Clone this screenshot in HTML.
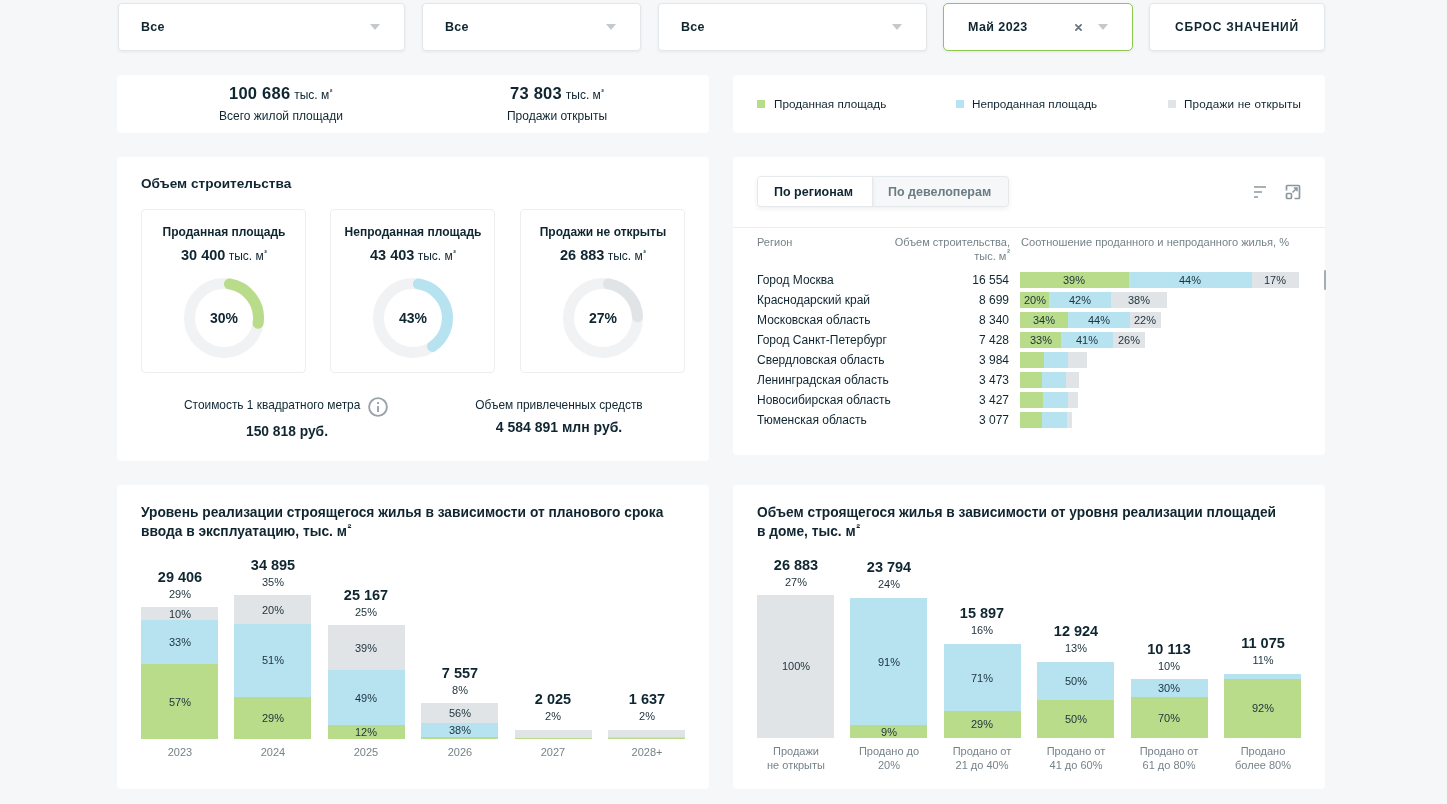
<!DOCTYPE html>
<html><head><meta charset="utf-8"><style>
html,body{margin:0;padding:0;}
body{width:1447px;height:804px;position:relative;overflow:hidden;background:#f6f7f8;font-family:"Liberation Sans",sans-serif;}
body div{position:absolute;}
.t{white-space:nowrap;will-change:transform;}
sup{font-size:0.68em;font-weight:700;vertical-align:0;position:relative;top:-0.5em;margin-left:0.5px;line-height:0;}
</style></head><body>
<div style="left:117.5px;top:3px;width:287.0px;height:48px;background:#fff;border:1px solid #e4e7e9;border-radius:4px;box-shadow:0 1px 3px rgba(20,40,50,0.07);box-sizing:border-box;"></div>
<div class="t" style="left:141px;top:21px;font-size:12.5px;line-height:12.5px;font-weight:700;color:#0f2631;letter-spacing:0.2px;">Все</div>
<svg style="position:absolute;left:370px;top:24px" width="10" height="6"><path d="M0 0H10L5 6Z" fill="#c3c9cc"/></svg>
<div style="left:421.5px;top:3px;width:219.5px;height:48px;background:#fff;border:1px solid #e4e7e9;border-radius:4px;box-shadow:0 1px 3px rgba(20,40,50,0.07);box-sizing:border-box;"></div>
<div class="t" style="left:445px;top:21px;font-size:12.5px;line-height:12.5px;font-weight:700;color:#0f2631;letter-spacing:0.2px;">Все</div>
<svg style="position:absolute;left:606px;top:24px" width="10" height="6"><path d="M0 0H10L5 6Z" fill="#c3c9cc"/></svg>
<div style="left:657.5px;top:3px;width:269.0px;height:48px;background:#fff;border:1px solid #e4e7e9;border-radius:4px;box-shadow:0 1px 3px rgba(20,40,50,0.07);box-sizing:border-box;"></div>
<div class="t" style="left:681px;top:21px;font-size:12.5px;line-height:12.5px;font-weight:700;color:#0f2631;letter-spacing:0.2px;">Все</div>
<svg style="position:absolute;left:892px;top:24px" width="10" height="6"><path d="M0 0H10L5 6Z" fill="#c3c9cc"/></svg>
<div style="left:943px;top:3px;width:190px;height:48px;background:#fff;border:1.5px solid #8dc84f;border-radius:5px;box-sizing:border-box;box-shadow:0 1px 3px rgba(20,40,50,0.07);"></div>
<div class="t" style="left:968px;top:21px;font-size:12.5px;line-height:12.5px;font-weight:700;color:#0f2631;letter-spacing:0.4px;">Май 2023</div>
<svg style="position:absolute;left:1074px;top:23px" width="9" height="9"><path d="M1.9 1.9L7.1 7.1M7.1 1.9L1.9 7.1" stroke="#617379" stroke-width="1.7" stroke-linecap="round"/></svg>
<svg style="position:absolute;left:1098px;top:24px" width="10" height="6"><path d="M0 0H10L5 6Z" fill="#c3c9cc"/></svg>
<div style="left:1149px;top:3px;width:176px;height:48px;background:#fff;border:1px solid #e4e7e9;border-radius:4px;box-shadow:0 1px 3px rgba(20,40,50,0.07);box-sizing:border-box;"></div>
<div class="t" style="left:1175px;top:21px;font-size:12px;line-height:12px;font-weight:700;color:#0f2631;letter-spacing:0.8px;">СБРОС ЗНАЧЕНИЙ</div>
<div style="left:117px;top:75px;width:592px;height:58px;background:#fff;border-radius:4px;"></div>
<div class="t" style="left:229px;top:85px;font-size:16.5px;line-height:16.5px;font-weight:700;color:#0f2631;"><span style="letter-spacing:0.25px">100 686</span><span style="font-size:12px;font-weight:400;margin-left:0.5px"> тыс. м<sup>²</sup></span></div>
<div class="t" style="left:-19px;width:600px;text-align:center;top:110px;font-size:12px;line-height:12px;font-weight:400;color:#0f2631;">Всего жилой площади</div>
<div class="t" style="left:510px;top:85px;font-size:16.5px;line-height:16.5px;font-weight:700;color:#0f2631;"><span style="letter-spacing:0.25px">73 803</span><span style="font-size:12px;font-weight:400;margin-left:0.5px"> тыс. м<sup>²</sup></span></div>
<div class="t" style="left:256.5px;width:600px;text-align:center;top:110px;font-size:12px;line-height:12px;font-weight:400;color:#0f2631;">Продажи открыты</div>
<div style="left:733px;top:75px;width:592px;height:58px;background:#fff;border-radius:4px;"></div>
<div style="left:757px;top:100px;width:8px;height:8px;background:#b9dc8b;"></div>
<div class="t" style="left:773.5px;top:98px;font-size:11.7px;line-height:11.7px;font-weight:400;color:#0f2631;">Проданная площадь</div>
<div style="left:956px;top:100px;width:8px;height:8px;background:#b7e3f1;"></div>
<div class="t" style="left:972.3px;top:98px;font-size:11.7px;line-height:11.7px;font-weight:400;color:#0f2631;">Непроданная площадь</div>
<div style="left:1168px;top:100px;width:8px;height:8px;background:#e1e4e6;"></div>
<div class="t" style="left:1184.2px;top:98px;font-size:11.7px;line-height:11.7px;font-weight:400;color:#0f2631;letter-spacing:0.2px;">Продажи не открыты</div>
<div style="left:117px;top:157px;width:592px;height:304px;background:#fff;border-radius:4px;"></div>
<div class="t" style="left:141px;top:177px;font-size:13.6px;line-height:13.6px;font-weight:700;color:#0f2631;">Объем строительства</div>
<div style="left:141px;top:209px;width:165px;height:164px;border:1px solid #eceef0;border-radius:4px;box-sizing:border-box;background:#fff;"></div>
<div class="t" style="left:-76.5px;width:600px;text-align:center;top:226px;font-size:12px;line-height:12px;font-weight:700;color:#0f2631;">Проданная площадь</div>
<div class="t" style="left:-76.5px;width:600px;text-align:center;top:248px;font-size:14.5px;line-height:14.5px;font-weight:700;color:#0f2631;">30 400<span style="font-size:12px;font-weight:400"> тыс. м<sup>²</sup></span></div>
<svg style="position:absolute;left:182.5px;top:277px" width="82" height="82" viewBox="-41 -41 82 82"><circle r="34.5" fill="none" stroke="#f1f2f4" stroke-width="11"/><path d="M5.48 -34.06A34.5 34.5 0 0 1 34.09 5.32" fill="none" stroke="#b9dc8b" stroke-width="11" stroke-linecap="round"/></svg>
<div class="t" style="left:-76.5px;width:600px;text-align:center;top:311px;font-size:14px;line-height:14px;font-weight:700;color:#0f2631;">30%</div>
<div style="left:330px;top:209px;width:165px;height:164px;border:1px solid #eceef0;border-radius:4px;box-sizing:border-box;background:#fff;"></div>
<div class="t" style="left:112.5px;width:600px;text-align:center;top:226px;font-size:12px;line-height:12px;font-weight:700;color:#0f2631;">Непроданная площадь</div>
<div class="t" style="left:112.5px;width:600px;text-align:center;top:248px;font-size:14.5px;line-height:14.5px;font-weight:700;color:#0f2631;">43 403<span style="font-size:12px;font-weight:400"> тыс. м<sup>²</sup></span></div>
<svg style="position:absolute;left:371.5px;top:277px" width="82" height="82" viewBox="-41 -41 82 82"><circle r="34.5" fill="none" stroke="#f1f2f4" stroke-width="11"/><path d="M5.48 -34.06A34.5 34.5 0 0 1 19.46 28.49" fill="none" stroke="#b7e3f1" stroke-width="11" stroke-linecap="round"/></svg>
<div class="t" style="left:112.5px;width:600px;text-align:center;top:311px;font-size:14px;line-height:14px;font-weight:700;color:#0f2631;">43%</div>
<div style="left:520px;top:209px;width:165px;height:164px;border:1px solid #eceef0;border-radius:4px;box-sizing:border-box;background:#fff;"></div>
<div class="t" style="left:302.5px;width:600px;text-align:center;top:226px;font-size:12px;line-height:12px;font-weight:700;color:#0f2631;">Продажи не открыты</div>
<div class="t" style="left:302.5px;width:600px;text-align:center;top:248px;font-size:14.5px;line-height:14.5px;font-weight:700;color:#0f2631;">26 883<span style="font-size:12px;font-weight:400"> тыс. м<sup>²</sup></span></div>
<svg style="position:absolute;left:561.5px;top:277px" width="82" height="82" viewBox="-41 -41 82 82"><circle r="34.5" fill="none" stroke="#f1f2f4" stroke-width="11"/><path d="M5.48 -34.06A34.5 34.5 0 0 1 34.48 -1.16" fill="none" stroke="#e1e4e6" stroke-width="11" stroke-linecap="round"/></svg>
<div class="t" style="left:302.5px;width:600px;text-align:center;top:311px;font-size:14px;line-height:14px;font-weight:700;color:#0f2631;">27%</div>
<div class="t" style="left:184px;top:400px;font-size:11.9px;line-height:11.9px;font-weight:400;color:#0f2631;">Стоимость 1 квадратного метра</div>
<svg style="position:absolute;left:368px;top:397px" width="20" height="20" viewBox="0 0 20 20"><circle cx="10" cy="10" r="8.9" fill="none" stroke="#98a4a9" stroke-width="1.9"/><rect x="9.05" y="5" width="1.9" height="2" fill="#98a4a9"/><rect x="9.05" y="9.1" width="1.9" height="5.9" fill="#98a4a9"/></svg>
<div class="t" style="left:-13px;width:600px;text-align:center;top:425px;font-size:13.8px;line-height:13.8px;font-weight:700;color:#0f2631;">150 818 руб.</div>
<div class="t" style="left:258.5px;width:600px;text-align:center;top:400px;font-size:11.9px;line-height:11.9px;font-weight:400;color:#0f2631;">Объем привлеченных средств</div>
<div class="t" style="left:258.5px;width:600px;text-align:center;top:420px;font-size:14px;line-height:14px;font-weight:700;color:#0f2631;">4 584 891 млн руб.</div>
<div style="left:733px;top:157px;width:592px;height:298px;background:#fff;border-radius:4px;"></div>
<div style="left:757px;top:176px;width:252px;height:31px;border:1px solid #e6e9eb;border-radius:4px;box-sizing:border-box;background:#f6f7f9;overflow:hidden;box-shadow:0 2px 5px rgba(20,40,50,0.07)"><div style="left:0;top:0;width:114px;height:29px;background:#fff;border-right:1px solid #e6e9eb;box-shadow:0 2px 4px rgba(20,40,50,0.08)"></div></div>
<div class="t" style="left:774px;top:186px;font-size:12.5px;line-height:12.5px;font-weight:700;color:#0f2631;">По регионам</div>
<div class="t" style="left:888px;top:186px;font-size:12.5px;line-height:12.5px;font-weight:700;color:#6b7c83;">По девелоперам</div>
<svg style="position:absolute;left:1252px;top:183px" width="16" height="16"><path d="M2 4H14M2 9H10M2 14H6" stroke="#8a979d" stroke-width="1.7"/></svg>
<svg style="position:absolute;left:1284px;top:183px" width="18" height="18" viewBox="0 0 18 18"><path d="M2.5 7.5V3.5A1 1 0 0 1 3.5 2.5H14.5A1 1 0 0 1 15.5 3.5V14.5A1 1 0 0 1 14.5 15.5H10.5" fill="none" stroke="#8a979d" stroke-width="1.7"/><rect x="2.5" y="10.5" width="5" height="5" rx="1" fill="none" stroke="#8a979d" stroke-width="1.7"/><path d="M8.5 9.5L12.8 5.2M9.8 5H13V8.2" fill="none" stroke="#8a979d" stroke-width="1.5"/></svg>
<div style="left:733px;top:227px;width:592px;height:1px;background:#eceff1;"></div>
<div class="t" style="left:757px;top:237px;font-size:11px;line-height:11px;font-weight:400;color:#758389;">Регион</div>
<div class="t" style="left:410px;width:600px;text-align:right;top:237px;font-size:11px;line-height:11px;font-weight:400;color:#758389;">Объем строительства,</div>
<div class="t" style="left:410px;width:600px;text-align:right;top:251px;font-size:11px;line-height:11px;font-weight:400;color:#758389;">тыс. м<sup style="font-size:0.85em;top:-0.4em">²</sup></div>
<div class="t" style="left:1020.5px;top:237px;font-size:11.1px;line-height:11.1px;font-weight:400;color:#758389;">Соотношение проданного и непроданного жилья, %</div>
<div class="t" style="left:757px;top:274px;font-size:12px;line-height:12px;font-weight:400;color:#0f2631;">Город Москва</div>
<div class="t" style="left:409px;width:600px;text-align:right;top:274px;font-size:12px;line-height:12px;font-weight:400;color:#0f2631;">16 554</div>
<div style="left:1020px;top:272px;width:108.81px;height:16px;background:#b9dc8b;"></div>
<div class="t" style="left:774.405px;width:600px;text-align:center;top:275px;font-size:11px;line-height:11px;font-weight:400;color:#1c313b;">39%</div>
<div style="left:1128.81px;top:272px;width:122.76px;height:16px;background:#b7e3f1;"></div>
<div class="t" style="left:890.19px;width:600px;text-align:center;top:275px;font-size:11px;line-height:11px;font-weight:400;color:#1c313b;">44%</div>
<div style="left:1251.57px;top:272px;width:47.43px;height:16px;background:#e1e4e6;"></div>
<div class="t" style="left:975.2849999999999px;width:600px;text-align:center;top:275px;font-size:11px;line-height:11px;font-weight:400;color:#1c313b;">17%</div>
<div class="t" style="left:757px;top:294px;font-size:12px;line-height:12px;font-weight:400;color:#0f2631;">Краснодарский край</div>
<div class="t" style="left:409px;width:600px;text-align:right;top:294px;font-size:12px;line-height:12px;font-weight:400;color:#0f2631;">8 699</div>
<div style="left:1020px;top:292px;width:29.32px;height:16px;background:#b9dc8b;"></div>
<div class="t" style="left:734.6612359550561px;width:600px;text-align:center;top:295px;font-size:11px;line-height:11px;font-weight:400;color:#1c313b;">20%</div>
<div style="left:1049.32px;top:292px;width:61.58px;height:16px;background:#b7e3f1;"></div>
<div class="t" style="left:780.1110674157303px;width:600px;text-align:center;top:295px;font-size:11px;line-height:11px;font-weight:400;color:#1c313b;">42%</div>
<div style="left:1110.9px;top:292px;width:55.71px;height:16px;background:#e1e4e6;"></div>
<div class="t" style="left:838.7560112359552px;width:600px;text-align:center;top:295px;font-size:11px;line-height:11px;font-weight:400;color:#1c313b;">38%</div>
<div class="t" style="left:757px;top:314px;font-size:12px;line-height:12px;font-weight:400;color:#0f2631;">Московская область</div>
<div class="t" style="left:409px;width:600px;text-align:right;top:314px;font-size:12px;line-height:12px;font-weight:400;color:#0f2631;">8 340</div>
<div style="left:1020px;top:312px;width:47.79px;height:16px;background:#b9dc8b;"></div>
<div class="t" style="left:743.8955056179775px;width:600px;text-align:center;top:315px;font-size:11px;line-height:11px;font-weight:400;color:#1c313b;">34%</div>
<div style="left:1067.79px;top:312px;width:61.85px;height:16px;background:#b7e3f1;"></div>
<div class="t" style="left:798.7146067415729px;width:600px;text-align:center;top:315px;font-size:11px;line-height:11px;font-weight:400;color:#1c313b;">44%</div>
<div style="left:1129.64px;top:312px;width:30.92px;height:16px;background:#e1e4e6;"></div>
<div class="t" style="left:845.0999999999999px;width:600px;text-align:center;top:315px;font-size:11px;line-height:11px;font-weight:400;color:#1c313b;">22%</div>
<div class="t" style="left:757px;top:334px;font-size:12px;line-height:12px;font-weight:400;color:#0f2631;">Город Санкт-Петербург</div>
<div class="t" style="left:409px;width:600px;text-align:right;top:334px;font-size:12px;line-height:12px;font-weight:400;color:#0f2631;">7 428</div>
<div style="left:1020px;top:332px;width:41.31px;height:16px;background:#b9dc8b;"></div>
<div class="t" style="left:740.6565168539325px;width:600px;text-align:center;top:335px;font-size:11px;line-height:11px;font-weight:400;color:#1c313b;">33%</div>
<div style="left:1061.31px;top:332px;width:51.33px;height:16px;background:#b7e3f1;"></div>
<div class="t" style="left:786.9771910112358px;width:600px;text-align:center;top:335px;font-size:11px;line-height:11px;font-weight:400;color:#1c313b;">41%</div>
<div style="left:1112.64px;top:332px;width:32.55px;height:16px;background:#e1e4e6;"></div>
<div class="t" style="left:828.9161797752809px;width:600px;text-align:center;top:335px;font-size:11px;line-height:11px;font-weight:400;color:#1c313b;">26%</div>
<div class="t" style="left:757px;top:354px;font-size:12px;line-height:12px;font-weight:400;color:#0f2631;">Свердловская область</div>
<div class="t" style="left:409px;width:600px;text-align:right;top:354px;font-size:12px;line-height:12px;font-weight:400;color:#0f2631;">3 984</div>
<div style="left:1020px;top:352px;width:23.84px;height:16px;background:#b9dc8b;"></div>
<div style="left:1043.84px;top:352px;width:24.17px;height:16px;background:#b7e3f1;"></div>
<div style="left:1068.01px;top:352px;width:19.14px;height:16px;background:#e1e4e6;"></div>
<div class="t" style="left:757px;top:374px;font-size:12px;line-height:12px;font-weight:400;color:#0f2631;">Ленинградская область</div>
<div class="t" style="left:409px;width:600px;text-align:right;top:374px;font-size:12px;line-height:12px;font-weight:400;color:#0f2631;">3 473</div>
<div style="left:1020px;top:372px;width:21.66px;height:16px;background:#b9dc8b;"></div>
<div style="left:1041.66px;top:372px;width:24.0px;height:16px;background:#b7e3f1;"></div>
<div style="left:1065.66px;top:372px;width:12.88px;height:16px;background:#e1e4e6;"></div>
<div class="t" style="left:757px;top:394px;font-size:12px;line-height:12px;font-weight:400;color:#0f2631;">Новосибирская область</div>
<div class="t" style="left:409px;width:600px;text-align:right;top:394px;font-size:12px;line-height:12px;font-weight:400;color:#0f2631;">3 427</div>
<div style="left:1020px;top:392px;width:23.1px;height:16px;background:#b9dc8b;"></div>
<div style="left:1043.1px;top:392px;width:24.84px;height:16px;background:#b7e3f1;"></div>
<div style="left:1067.94px;top:392px;width:9.82px;height:16px;background:#e1e4e6;"></div>
<div class="t" style="left:757px;top:414px;font-size:12px;line-height:12px;font-weight:400;color:#0f2631;">Тюменская область</div>
<div class="t" style="left:409px;width:600px;text-align:right;top:414px;font-size:12px;line-height:12px;font-weight:400;color:#0f2631;">3 077</div>
<div style="left:1020px;top:412px;width:21.78px;height:16px;background:#b9dc8b;"></div>
<div style="left:1041.78px;top:412px;width:24.89px;height:16px;background:#b7e3f1;"></div>
<div style="left:1066.67px;top:412px;width:5.19px;height:16px;background:#e1e4e6;"></div>
<div style="left:1323.5px;top:270px;width:2px;height:20px;background:#a4aeb2;border-radius:1px;"></div>
<div style="left:117px;top:485px;width:592px;height:304px;background:#fff;border-radius:4px;"></div>
<div class="t" style="left:141.4px;top:505.5px;font-size:13.75px;line-height:13.75px;font-weight:700;color:#0f2631;">Уровень реализации строящегося жилья в зависимости от планового срока</div>
<div class="t" style="left:141.4px;top:524.5px;font-size:13.75px;line-height:13.75px;font-weight:700;color:#0f2631;">ввода в эксплуатацию, тыс. м<sup style="font-size:0.85em;top:-0.35em">²</sup></div>
<div style="left:141.0px;top:607px;width:77px;height:13px;background:#e1e4e6;"></div>
<div class="t" style="left:-120.5px;width:600px;text-align:center;top:609px;font-size:11px;line-height:11px;font-weight:400;color:#1c313b;">10%</div>
<div style="left:141.0px;top:620px;width:77px;height:44px;background:#b7e3f1;"></div>
<div class="t" style="left:-120.5px;width:600px;text-align:center;top:637px;font-size:11px;line-height:11px;font-weight:400;color:#1c313b;">33%</div>
<div style="left:141.0px;top:664px;width:77px;height:75px;background:#b9dc8b;"></div>
<div class="t" style="left:-120.5px;width:600px;text-align:center;top:697px;font-size:11px;line-height:11px;font-weight:400;color:#1c313b;">57%</div>
<div class="t" style="left:-120.5px;width:600px;text-align:center;top:570px;font-size:14.5px;line-height:14.5px;font-weight:700;color:#0f2631;">29 406</div>
<div class="t" style="left:-120.5px;width:600px;text-align:center;top:589px;font-size:11px;line-height:11px;font-weight:400;color:#1c313b;">29%</div>
<div style="left:234.4px;top:595px;width:77px;height:29px;background:#e1e4e6;"></div>
<div class="t" style="left:-27.100000000000023px;width:600px;text-align:center;top:605px;font-size:11px;line-height:11px;font-weight:400;color:#1c313b;">20%</div>
<div style="left:234.4px;top:624px;width:77px;height:73px;background:#b7e3f1;"></div>
<div class="t" style="left:-27.100000000000023px;width:600px;text-align:center;top:655px;font-size:11px;line-height:11px;font-weight:400;color:#1c313b;">51%</div>
<div style="left:234.4px;top:697px;width:77px;height:42px;background:#b9dc8b;"></div>
<div class="t" style="left:-27.100000000000023px;width:600px;text-align:center;top:713px;font-size:11px;line-height:11px;font-weight:400;color:#1c313b;">29%</div>
<div class="t" style="left:-27.100000000000023px;width:600px;text-align:center;top:558px;font-size:14.5px;line-height:14.5px;font-weight:700;color:#0f2631;">34 895</div>
<div class="t" style="left:-27.100000000000023px;width:600px;text-align:center;top:577px;font-size:11px;line-height:11px;font-weight:400;color:#1c313b;">35%</div>
<div style="left:327.8px;top:625px;width:77px;height:45px;background:#e1e4e6;"></div>
<div class="t" style="left:66.30000000000001px;width:600px;text-align:center;top:643px;font-size:11px;line-height:11px;font-weight:400;color:#1c313b;">39%</div>
<div style="left:327.8px;top:670px;width:77px;height:55px;background:#b7e3f1;"></div>
<div class="t" style="left:66.30000000000001px;width:600px;text-align:center;top:693px;font-size:11px;line-height:11px;font-weight:400;color:#1c313b;">49%</div>
<div style="left:327.8px;top:725px;width:77px;height:14px;background:#b9dc8b;"></div>
<div class="t" style="left:66.30000000000001px;width:600px;text-align:center;top:727px;font-size:11px;line-height:11px;font-weight:400;color:#1c313b;">12%</div>
<div class="t" style="left:66.30000000000001px;width:600px;text-align:center;top:588px;font-size:14.5px;line-height:14.5px;font-weight:700;color:#0f2631;">25 167</div>
<div class="t" style="left:66.30000000000001px;width:600px;text-align:center;top:607px;font-size:11px;line-height:11px;font-weight:400;color:#1c313b;">25%</div>
<div style="left:421.2px;top:703px;width:77px;height:20px;background:#e1e4e6;"></div>
<div class="t" style="left:159.70000000000005px;width:600px;text-align:center;top:708px;font-size:11px;line-height:11px;font-weight:400;color:#1c313b;">56%</div>
<div style="left:421.2px;top:723px;width:77px;height:14.2px;background:#b7e3f1;"></div>
<div class="t" style="left:159.70000000000005px;width:600px;text-align:center;top:725px;font-size:11px;line-height:11px;font-weight:400;color:#1c313b;">38%</div>
<div style="left:421.2px;top:737.2px;width:77px;height:1.8px;background:#b9dc8b;"></div>
<div class="t" style="left:159.70000000000005px;width:600px;text-align:center;top:666px;font-size:14.5px;line-height:14.5px;font-weight:700;color:#0f2631;">7 557</div>
<div class="t" style="left:159.70000000000005px;width:600px;text-align:center;top:685px;font-size:11px;line-height:11px;font-weight:400;color:#1c313b;">8%</div>
<div style="left:514.6px;top:730px;width:77px;height:7.6px;background:#e1e4e6;"></div>
<div style="left:514.6px;top:737.6px;width:77px;height:0.6px;background:#b7e3f1;"></div>
<div style="left:514.6px;top:738.2px;width:77px;height:0.8px;background:#b9dc8b;"></div>
<div class="t" style="left:253.10000000000002px;width:600px;text-align:center;top:692px;font-size:14.5px;line-height:14.5px;font-weight:700;color:#0f2631;">2 025</div>
<div class="t" style="left:253.10000000000002px;width:600px;text-align:center;top:711px;font-size:11px;line-height:11px;font-weight:400;color:#1c313b;">2%</div>
<div style="left:608.0px;top:730px;width:77px;height:6.6px;background:#e1e4e6;"></div>
<div style="left:608.0px;top:736.6px;width:77px;height:1.4px;background:#b7e3f1;"></div>
<div style="left:608.0px;top:738px;width:77px;height:1px;background:#b9dc8b;"></div>
<div class="t" style="left:346.5px;width:600px;text-align:center;top:692px;font-size:14.5px;line-height:14.5px;font-weight:700;color:#0f2631;">1 637</div>
<div class="t" style="left:346.5px;width:600px;text-align:center;top:711px;font-size:11px;line-height:11px;font-weight:400;color:#1c313b;">2%</div>
<div class="t" style="left:-120.5px;width:600px;text-align:center;top:746.5px;font-size:11px;line-height:11px;font-weight:400;color:#758389;">2023</div>
<div class="t" style="left:-27.100000000000023px;width:600px;text-align:center;top:746.5px;font-size:11px;line-height:11px;font-weight:400;color:#758389;">2024</div>
<div class="t" style="left:66.30000000000001px;width:600px;text-align:center;top:746.5px;font-size:11px;line-height:11px;font-weight:400;color:#758389;">2025</div>
<div class="t" style="left:159.70000000000005px;width:600px;text-align:center;top:746.5px;font-size:11px;line-height:11px;font-weight:400;color:#758389;">2026</div>
<div class="t" style="left:253.10000000000002px;width:600px;text-align:center;top:746.5px;font-size:11px;line-height:11px;font-weight:400;color:#758389;">2027</div>
<div class="t" style="left:346.5px;width:600px;text-align:center;top:746.5px;font-size:11px;line-height:11px;font-weight:400;color:#758389;">2028+</div>
<div style="left:733px;top:485px;width:592px;height:304px;background:#fff;border-radius:4px;"></div>
<div class="t" style="left:757.4px;top:505.5px;font-size:13.75px;line-height:13.75px;font-weight:700;color:#0f2631;">Объем строящегося жилья в зависимости от уровня реализации площадей</div>
<div class="t" style="left:757.4px;top:524.5px;font-size:13.75px;line-height:13.75px;font-weight:700;color:#0f2631;">в доме, тыс. м<sup style="font-size:0.85em;top:-0.35em">²</sup></div>
<div style="left:757.0px;top:595px;width:77px;height:143px;background:#e1e4e6;"></div>
<div class="t" style="left:495.5px;width:600px;text-align:center;top:661px;font-size:11px;line-height:11px;font-weight:400;color:#1c313b;">100%</div>
<div class="t" style="left:495.5px;width:600px;text-align:center;top:558px;font-size:14.5px;line-height:14.5px;font-weight:700;color:#0f2631;">26 883</div>
<div class="t" style="left:495.5px;width:600px;text-align:center;top:577px;font-size:11px;line-height:11px;font-weight:400;color:#1c313b;">27%</div>
<div style="left:850.4px;top:598px;width:77px;height:127px;background:#b7e3f1;"></div>
<div class="t" style="left:588.9px;width:600px;text-align:center;top:657px;font-size:11px;line-height:11px;font-weight:400;color:#1c313b;">91%</div>
<div style="left:850.4px;top:725px;width:77px;height:13px;background:#b9dc8b;"></div>
<div class="t" style="left:588.9px;width:600px;text-align:center;top:727px;font-size:11px;line-height:11px;font-weight:400;color:#1c313b;">9%</div>
<div class="t" style="left:588.9px;width:600px;text-align:center;top:560px;font-size:14.5px;line-height:14.5px;font-weight:700;color:#0f2631;">23 794</div>
<div class="t" style="left:588.9px;width:600px;text-align:center;top:579px;font-size:11px;line-height:11px;font-weight:400;color:#1c313b;">24%</div>
<div style="left:943.8px;top:644px;width:77px;height:67px;background:#b7e3f1;"></div>
<div class="t" style="left:682.3px;width:600px;text-align:center;top:673px;font-size:11px;line-height:11px;font-weight:400;color:#1c313b;">71%</div>
<div style="left:943.8px;top:711px;width:77px;height:27px;background:#b9dc8b;"></div>
<div class="t" style="left:682.3px;width:600px;text-align:center;top:719px;font-size:11px;line-height:11px;font-weight:400;color:#1c313b;">29%</div>
<div class="t" style="left:682.3px;width:600px;text-align:center;top:606px;font-size:14.5px;line-height:14.5px;font-weight:700;color:#0f2631;">15 897</div>
<div class="t" style="left:682.3px;width:600px;text-align:center;top:625px;font-size:11px;line-height:11px;font-weight:400;color:#1c313b;">16%</div>
<div style="left:1037.2px;top:662px;width:77px;height:38px;background:#b7e3f1;"></div>
<div class="t" style="left:775.7px;width:600px;text-align:center;top:676px;font-size:11px;line-height:11px;font-weight:400;color:#1c313b;">50%</div>
<div style="left:1037.2px;top:700px;width:77px;height:38px;background:#b9dc8b;"></div>
<div class="t" style="left:775.7px;width:600px;text-align:center;top:714px;font-size:11px;line-height:11px;font-weight:400;color:#1c313b;">50%</div>
<div class="t" style="left:775.7px;width:600px;text-align:center;top:624px;font-size:14.5px;line-height:14.5px;font-weight:700;color:#0f2631;">12 924</div>
<div class="t" style="left:775.7px;width:600px;text-align:center;top:643px;font-size:11px;line-height:11px;font-weight:400;color:#1c313b;">13%</div>
<div style="left:1130.6px;top:679px;width:77px;height:18px;background:#b7e3f1;"></div>
<div class="t" style="left:869.0999999999999px;width:600px;text-align:center;top:683px;font-size:11px;line-height:11px;font-weight:400;color:#1c313b;">30%</div>
<div style="left:1130.6px;top:697px;width:77px;height:41px;background:#b9dc8b;"></div>
<div class="t" style="left:869.0999999999999px;width:600px;text-align:center;top:713px;font-size:11px;line-height:11px;font-weight:400;color:#1c313b;">70%</div>
<div class="t" style="left:869.0999999999999px;width:600px;text-align:center;top:642px;font-size:14.5px;line-height:14.5px;font-weight:700;color:#0f2631;">10 113</div>
<div class="t" style="left:869.0999999999999px;width:600px;text-align:center;top:661px;font-size:11px;line-height:11px;font-weight:400;color:#1c313b;">10%</div>
<div style="left:1224.0px;top:674px;width:77px;height:5px;background:#b7e3f1;"></div>
<div style="left:1224.0px;top:679px;width:77px;height:59px;background:#b9dc8b;"></div>
<div class="t" style="left:962.5px;width:600px;text-align:center;top:703px;font-size:11px;line-height:11px;font-weight:400;color:#1c313b;">92%</div>
<div class="t" style="left:962.5px;width:600px;text-align:center;top:636px;font-size:14.5px;line-height:14.5px;font-weight:700;color:#0f2631;">11 075</div>
<div class="t" style="left:962.5px;width:600px;text-align:center;top:655px;font-size:11px;line-height:11px;font-weight:400;color:#1c313b;">11%</div>
<div class="t" style="left:495.5px;width:600px;text-align:center;top:746px;font-size:11px;line-height:11px;font-weight:400;color:#758389;">Продажи</div>
<div class="t" style="left:495.5px;width:600px;text-align:center;top:760px;font-size:11px;line-height:11px;font-weight:400;color:#758389;">не открыты</div>
<div class="t" style="left:588.9px;width:600px;text-align:center;top:746px;font-size:11px;line-height:11px;font-weight:400;color:#758389;">Продано до</div>
<div class="t" style="left:588.9px;width:600px;text-align:center;top:760px;font-size:11px;line-height:11px;font-weight:400;color:#758389;">20%</div>
<div class="t" style="left:682.3px;width:600px;text-align:center;top:746px;font-size:11px;line-height:11px;font-weight:400;color:#758389;">Продано от</div>
<div class="t" style="left:682.3px;width:600px;text-align:center;top:760px;font-size:11px;line-height:11px;font-weight:400;color:#758389;">21 до 40%</div>
<div class="t" style="left:775.7px;width:600px;text-align:center;top:746px;font-size:11px;line-height:11px;font-weight:400;color:#758389;">Продано от</div>
<div class="t" style="left:775.7px;width:600px;text-align:center;top:760px;font-size:11px;line-height:11px;font-weight:400;color:#758389;">41 до 60%</div>
<div class="t" style="left:869.0999999999999px;width:600px;text-align:center;top:746px;font-size:11px;line-height:11px;font-weight:400;color:#758389;">Продано от</div>
<div class="t" style="left:869.0999999999999px;width:600px;text-align:center;top:760px;font-size:11px;line-height:11px;font-weight:400;color:#758389;">61 до 80%</div>
<div class="t" style="left:962.5px;width:600px;text-align:center;top:746px;font-size:11px;line-height:11px;font-weight:400;color:#758389;">Продано</div>
<div class="t" style="left:962.5px;width:600px;text-align:center;top:760px;font-size:11px;line-height:11px;font-weight:400;color:#758389;">более 80%</div>
</body></html>
